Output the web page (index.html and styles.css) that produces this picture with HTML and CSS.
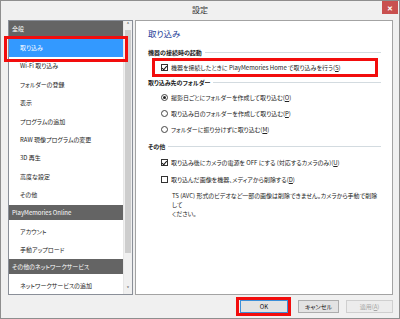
FILE: index.html
```html
<!DOCTYPE html>
<html lang="ja">
<head>
<meta charset="utf-8">
<title>設定</title>
<link rel="stylesheet" href="styles.css">
</head>
<body>
<div class="window">
  <div class="titlebar">
    <span class="spacer"></span>
    <span class="title">設定</span>
    <span class="close">✕</span>
  </div>
  <div class="main">
    <div class="sidebar">
      <div class="list">
        <div class="group">全般</div>
        <div class="item selected">取り込み</div>
        <div class="item">Wi-Fi 取り込み</div>
        <div class="item">フォルダーの登録</div>
        <div class="item">表示</div>
        <div class="item">プログラムの追加</div>
        <div class="item">RAW 現像プログラムの変更</div>
        <div class="item">3D 再生</div>
        <div class="item">高度な設定</div>
        <div class="item">その他</div>
        <div class="group">PlayMemories Online</div>
        <div class="item">アカウント</div>
        <div class="item">手動アップロード</div>
        <div class="group">その他のネットワークサービス</div>
        <div class="item last">ネットワークサービスの追加</div>
      </div>
      <div class="scrollbar">
        <div class="arrow">&#x02C4;</div>
        <div class="thumb"></div>
        <div class="track"></div>
        <div class="arrow">&#x02C5;</div>
      </div>
    </div>
    <div class="panel">
      <h1 class="page-title">取り込み</h1>

      <div class="legend sec1"><span>機器の接続時の起動</span></div>
      <div class="opt cb-row boxed">
        <span class="checkbox checked"></span>
        <span>機器を接続したときに PlayMemories Home で取り込みを行う(<u>S</u>)</span>
      </div>

      <div class="legend sec2"><span>取り込み先のフォルダー</span></div>
      <div class="opt radio-row first">
        <span class="radio on"></span>
        <span>撮影日ごとにフォルダーを作成して取り込む(<u>O</u>)</span>
      </div>
      <div class="opt radio-row">
        <span class="radio"></span>
        <span>取り込み日のフォルダーを作成して取り込む(<u>P</u>)</span>
      </div>
      <div class="opt radio-row">
        <span class="radio"></span>
        <span>フォルダーに振り分けずに取り込む(<u>M</u>)</span>
      </div>

      <div class="legend sec3"><span>その他</span></div>
      <div class="opt check-row first">
        <span class="checkbox checked"></span>
        <span>取り込み後にカメラの電源を OFF にする (対応するカメラのみ)(<u>U</u>)</span>
      </div>
      <div class="opt check-row">
        <span class="checkbox"></span>
        <span>取り込んだ画像を機器、メディアから削除する(<u>D</u>)</span>
      </div>
      <p class="note">TS (AVC) 形式のビデオなど一部の画像は削除できません。カメラから手動で削除して<br>ください。</p>
    </div>
  </div>
  <div class="footer">
    <button class="btn ok">OK</button>
    <button class="btn cancel">キャンセル</button>
    <button class="btn apply" disabled>適用(<u>A</u>)</button>
  </div>
</div>
</body>
</html>
```

FILE: styles.css
```css
* {
  box-sizing: border-box;
  margin: 0;
  padding: 0;
}

html, body {
  width: 400px;
  height: 319px;
  overflow: hidden;
}

body {
  font-family: "Noto Sans CJK JP", "Noto Sans", sans-serif;
  font-size: 6px;
  font-feature-settings: "palt";
  color: #111;
  background: #fff;
}

.window {
  width: 400px;
  height: 319px;
  background: #f0f0f0;
  border: 1px solid #8e8e8e;
  display: flex;
  flex-direction: column;
}

/* title bar */
.titlebar {
  height: 17px;
  display: grid;
  grid-template-columns: 1fr auto 1fr;
  align-items: center;
}

.title {
  font-size: 8px;
  color: #333;
}

.close {
  justify-self: end;
  align-self: start;
  width: 16px;
  height: 13px;
  margin-top: 0;
  margin-right: 1px;
  background: #c9504f;
  color: #fff;
  font-size: 7px;
  font-weight: bold;
  display: flex;
  align-items: center;
  justify-content: center;
}

/* main area */
.main {
  height: 277px;
  display: flex;
  gap: 2px;
  padding: 2px 5px 0 7px;
}

.sidebar {
  width: 125px;
  height: 275px;
  border: 1px solid #8a8f98;
  background: #fff;
  display: flex;
}

.list {
  width: 114px;
  display: flex;
  flex-direction: column;
}

.group {
  height: 15px;
  line-height: 15px;
  flex: none;
  background: #646464;
  color: #fff;
  padding-left: 3px;
  margin-bottom: 3px;
  white-space: nowrap;
}

.item {
  height: 18.4px;
  line-height: 18.4px;
  flex: none;
  padding-left: 11px;
  color: #222;
  white-space: nowrap;
}

.item.last {
  height: 16px;
  line-height: 18px;
}

.item.selected {
  position: relative;
  background: #3399ff;
  color: #fff;
}

.item.selected::after {
  content: "";
  position: absolute;
  left: -5px;
  right: -5px;
  top: -3px;
  bottom: -4.6px;
  border: 3px solid #f20d0d;
}

.scrollbar {
  width: 9px;
  background: #f0f0f0;
  display: flex;
  flex-direction: column;
  border-left: 1px solid #e6e6e6;
}

.arrow {
  height: 9px;
  flex: none;
  font-size: 7px;
  line-height: 9px;
  text-align: center;
  color: #444;
  font-weight: bold;
}

.thumb {
  height: 223px;
  flex: none;
  margin: 0 1px;
  background: #cdcdcd;
}

.track {
  flex: 1;
}

/* right panel */
.panel {
  width: 258px;
  height: 275px;
  border: 1px solid #a3a3a3;
  background: #fff;
  padding: 0 11px 0 12px;
}

.page-title {
  margin-top: 6px;
  font-size: 8.5px;
  line-height: 12px;
  font-weight: normal;
  color: #1d3d97;
}

.legend {
  display: flex;
  align-items: center;
  gap: 3px;
  height: 10px;
  font-weight: bold;
  color: #222;
}

.legend::after {
  content: "";
  flex: 1;
  height: 1px;
  background: #d3dbe0;
}

.sec1 { margin-top: 8px; }
.sec2 { margin-top: 3px; }
.sec3 { margin-top: 4px; }

.opt {
  display: flex;
  align-items: center;
  gap: 3px;
  margin-left: 13px;
  white-space: nowrap;
  color: #222;
}

.cb-row {
  height: 14px;
  margin-top: 3px;
}

.boxed {
  position: relative;
}

.boxed::after {
  content: "";
  position: absolute;
  left: -9px;
  right: 3px;
  top: -2px;
  bottom: -3px;
  border: 3px solid #f20d0d;
}

.radio-row {
  height: 16px;
}

.radio-row.first { margin-top: 2px; }

.check-row {
  height: 17px;
}

.check-row.first { margin-top: 3px; }

.checkbox {
  width: 7px;
  height: 7px;
  flex: none;
  border: 1px solid #333;
  background: #fff;
  position: relative;
}

.checkbox.checked::before {
  content: "";
  position: absolute;
  left: 1px;
  top: 0px;
  width: 2px;
  height: 3.5px;
  border: solid #111;
  border-width: 0 1.3px 1.3px 0;
  transform: rotate(40deg);
  transform-origin: center;
}

.radio {
  width: 7px;
  height: 7px;
  flex: none;
  border: 1px solid #444;
  border-radius: 50%;
  background: #fff;
  display: flex;
  align-items: center;
  justify-content: center;
}

.radio.on::before {
  content: "";
  width: 3px;
  height: 3px;
  border-radius: 50%;
  background: #222;
}

.note {
  margin-top: 3px;
  padding-left: 24px;
  line-height: 9px;
  color: #222;
}

/* footer */
.footer {
  flex: 1;
  display: flex;
  justify-content: flex-end;
  align-items: flex-start;
  padding: 5px 6px 0 0;
}

.btn {
  height: 13px;
  font-family: inherit;
  font-size: 6px;
  font-feature-settings: "palt";
  color: #111;
  background: #e3e3e3;
  border: 1px solid #adadad;
}

.btn.ok {
  width: 48px;
  border-color: #3c8fd8;
  position: relative;
}

.btn.ok::after {
  content: "";
  position: absolute;
  left: -5px;
  right: -4px;
  top: -4px;
  bottom: -4px;
  border: 3px solid #f20d0d;
}

.btn.cancel {
  width: 41px;
  margin-left: 10px;
}

.btn.apply {
  width: 47px;
  margin-left: 7px;
  color: #a6a6a6;
  background: #ececec;
  border-color: #cfcfcf;
}
```
